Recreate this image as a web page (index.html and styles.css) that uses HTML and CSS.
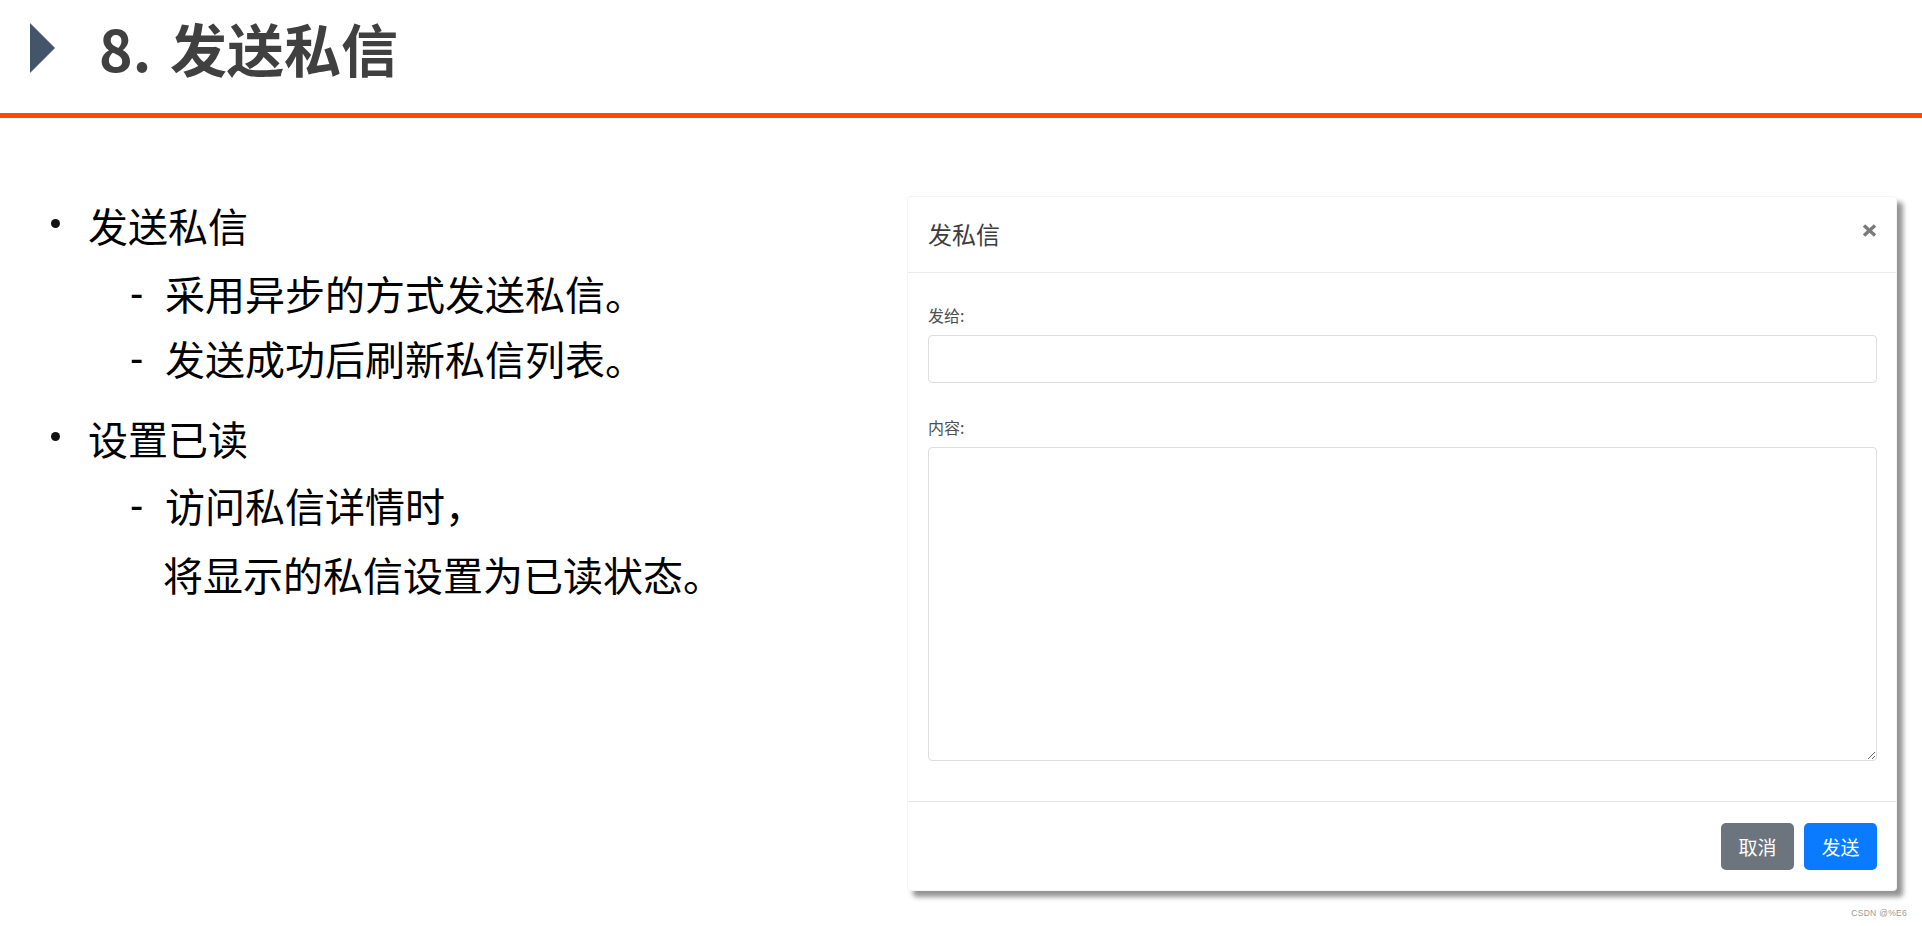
FILE: index.html
```html
<!DOCTYPE html>
<html lang="zh-CN">
<head>
<meta charset="utf-8">
<title>8. 发送私信</title>
<link rel="stylesheet" href="styles.css">
</head>
<body>
<header class="slide-head">
  <span class="head-tri"></span>
  <h1 class="head-title">8. 发送私信</h1>
</header>
<div class="head-rule"></div>
<main class="slide-body">
  <section class="points">
    <div class="pt lvl1"><span class="dot"></span><span class="txt">发送私信</span></div>
    <div class="pt lvl2 s1"><span class="dash">-</span><span class="txt">采用异步的方式发送私信。</span></div>
    <div class="pt lvl2 s2"><span class="dash">-</span><span class="txt">发送成功后刷新私信列表。</span></div>
    <div class="pt lvl1 b2"><span class="dot"></span><span class="txt">设置已读</span></div>
    <div class="pt lvl2 s3"><span class="dash">-</span><span class="txt"><span class="ln">访问私信详情时，</span><span class="ln ln2">将显示的私信设置为已读状态。</span></span></div>
  </section>
  <section class="modal">
    <div class="modal-head">
      <span class="modal-title">发私信</span>
      <svg class="modal-close" width="15" height="13" viewBox="0 0 15 13"><path d="M2 1.5 L13 11.5 M13 1.5 L2 11.5" stroke="#7a7a7a" stroke-width="3.4" stroke-linecap="butt"/></svg>
    </div>
    <div class="modal-main">
      <label class="fld-label">发给:</label>
      <input class="fld-input" type="text">
      <label class="fld-label second">内容:</label>
      <textarea class="fld-area"></textarea>
    </div>
    <div class="modal-foot">
      <button class="btn btn-gray">取消</button>
      <button class="btn btn-blue">发送</button>
    </div>
  </section>
</main>
<div class="watermark">CSDN @%E6</div>
</body>
</html>
```
FILE: styles.css
```css
html, body {
  margin: 0;
  padding: 0;
}
body {
  width: 1922px;
  height: 926px;
  overflow: hidden;
  position: relative;
  background: #ffffff;
  font-family: "Noto Sans CJK SC", "Microsoft YaHei", sans-serif;
  color: #000;
}
.slide-head {
  height: 113px;
  box-sizing: border-box;
  display: flex;
  align-items: flex-start;
  padding-left: 30px;
  padding-top: 19px;
}
.head-tri {
  width: 0;
  height: 0;
  border-top: 25px solid transparent;
  border-bottom: 25px solid transparent;
  border-left: 25px solid #44546a;
  margin-top: 4px;
}
.head-title {
  margin: 0 0 0 44px;
  font-size: 57px;
  line-height: 56px;
  font-weight: 700;
  color: #404040;
  word-spacing: 6px;
}
.head-rule {
  height: 5px;
  background: #ff4b00;
}
.slide-body {
  display: flex;
  padding-top: 78px;
}
.points {
  width: 907px;
  flex-shrink: 0;
  margin-top: -3px;
}
.pt {
  display: flex;
  align-items: flex-start;
  font-size: 40px;
  line-height: 64px;
  color: #000;
}
.lvl1 {
  padding-left: 51px;
}
.dot {
  width: 9px;
  height: 9px;
  border-radius: 50%;
  background: #111;
  margin-top: 26px;
  margin-right: 28px;
}
.lvl2 {
  padding-left: 130px;
}
.dash {
  width: 35px;
  font-family: "Liberation Sans", sans-serif;
  font-size: 40px;
}
.s1 { margin-top: 4px; }
.s2 { margin-top: 1px; }
.b2 { margin-top: 16px; }
.s3 { margin-top: 3px; }
.txt {
  display: flex;
  flex-direction: column;
}
.ln2 {
  margin-top: 5px;
  margin-left: -2px;
}
.modal {
  width: 990px;
  height: 695px;
  box-sizing: border-box;
  background: #fff;
  border-radius: 4px;
  border: 1px solid rgba(0,0,0,0.04);
  box-shadow: 6px 6px 5px rgba(0,0,0,0.42);
  display: flex;
  flex-direction: column;
}
.modal-head {
  height: 78px;
  box-sizing: border-box;
  border-bottom: 1px solid #e9ecef;
  display: flex;
  align-items: center;
  justify-content: space-between;
  padding: 0 19px 2px 20px;
}
.modal-title {
  font-size: 24px;
  line-height: 30px;
  color: #3c3c3c;
}
.modal-close {
  display: block;
  margin-top: -6px;
}
.modal-main {
  display: flex;
  flex-direction: column;
  padding: 30px 19px 40px 20px;
}
.fld-label {
  font-size: 16px;
  line-height: 24px;
  color: #505050;
  margin-bottom: 8px;
}
.fld-label.second {
  margin-top: 32px;
}
.fld-input {
  height: 48px;
  box-sizing: border-box;
  border: 1px solid #dedede;
  border-radius: 4px;
  margin: 0;
  padding: 6px 12px;
  font: inherit;
  outline: none;
}
.fld-area {
  height: 314px;
  box-sizing: border-box;
  border: 1px solid #dedede;
  border-radius: 4px;
  margin: 0;
  padding: 6px 12px;
  font: inherit;
  outline: none;
  resize: vertical;
}
.modal-foot {
  border-top: 1px solid #e4e4e4;
  display: flex;
  justify-content: flex-end;
  gap: 10px;
  padding: 21px 19px 20px;
}
.btn {
  width: 73px;
  height: 47px;
  border: none;
  border-radius: 5px;
  color: #fff;
  font-family: "Noto Sans CJK SC", "Microsoft YaHei", sans-serif;
  font-size: 19px;
  padding: 0;
  line-height: 47px;
}
.btn-gray { background: #6c757d; }
.btn-blue { background: #0a7bff; }
.watermark {
  position: absolute;
  right: 15px;
  bottom: 8px;
  font-family: "Liberation Sans", sans-serif;
  font-size: 8.5px;
  color: #9a9a9a;
  letter-spacing: 0.3px;
}
```
